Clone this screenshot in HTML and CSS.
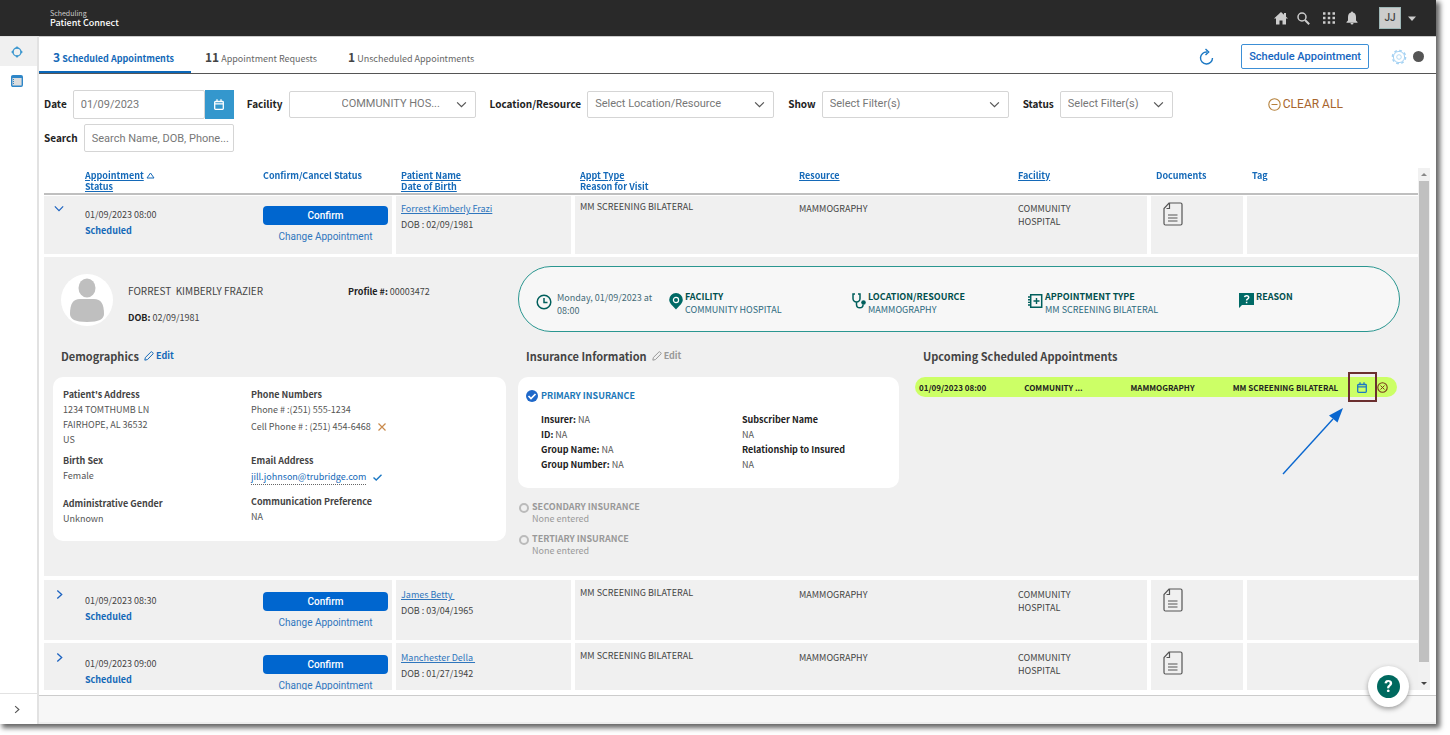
FILE: index.html
```html
<!DOCTYPE html>
<html lang="en">
<head>
<meta charset="utf-8">
<title>Patient Connect - Scheduling</title>
<link rel="stylesheet" href="styles.css">
</head>
<body>
<svg class="sprite" aria-hidden="true">
  <symbol id="i-doc" viewBox="0 0 20 24"><path d="M6 1h11.500a1.500 1.500 0 0 1 1.500 1.500v19a1.500 1.500 0 0 1-1.500 1.500h-15a1.500 1.500 0 0 1-1.500-1.500v-15zM6.500 1v5.500h-3M5 13h9.500M5 16h9.500M5 19h9.500" fill="none" stroke="#555" stroke-width="1.200"/></symbol>
  <symbol id="i-down" viewBox="0 0 12 8"><path d="M1 1.500l5 5 5-5" fill="none" stroke="currentColor" stroke-width="1.400"/></symbol>
  <symbol id="i-right" viewBox="0 0 8 12"><path d="M1.500 1.500l5 4.500-5 4.500" fill="none" stroke="currentColor" stroke-width="1.500"/></symbol>
  <symbol id="i-cal" viewBox="0 0 10 11"><path d="M1.500 2.500h7a.800.800 0 0 1 .800.800v6.200a.800.800 0 0 1-.800.800h-7a.800.800 0 0 1-.800-.800v-6.200a.800.800 0 0 1 .800-.800zM.700 4.900h8.600M3 .300v2.500M7 .300v2.500" fill="none" stroke="currentColor" stroke-width="1.300"/></symbol>
  <symbol id="i-pencil" viewBox="0 0 12 12"><path d="M1 11l.600-3.200L8.300 1.200a1 1 0 0 1 1.400 0l1 1a1 1 0 0 1 0 1.400L4.100 10.300z" fill="none" stroke="currentColor" stroke-width="1.200"/></symbol>
</svg>
<div class="app">
  <header class="topbar">
    <div class="brand"><span class="brand-sub">Scheduling</span><span class="brand-main">Patient Connect</span></div>
    <nav class="top-icons">
      <button type="button" aria-label="Home"><svg width="14" height="13" viewBox="0 0 14 13"><path d="M7 0l3 2.800V1h2v3.700L14 6.600h-2V12.500H8.500V8.500h-3v4H2V6.600H0z" fill="#ccc"/></svg></button>
      <button type="button" aria-label="Search"><svg width="13" height="13" viewBox="0 0 13 13"><circle cx="5" cy="5" r="4" fill="none" stroke="#ccc" stroke-width="1.500"/><path d="M8 8l4.200 4.200" stroke="#ccc" stroke-width="2"/></svg></button>
      <button type="button" aria-label="Apps" class="apps"><svg width="12" height="12" viewBox="0 0 12 12"><path d="M0 1.500h12M0 6h12M0 10.500h12" stroke="#ccc" stroke-width="2.500" stroke-dasharray="2.500 2.250"/></svg></button>
      <button type="button" aria-label="Notifications" class="bell"><svg width="12" height="14" viewBox="0 0 12 14"><path d="M6 .500a1 1 0 0 1 1 1C9 2 10 3.700 10 6v3.500l1.500 1.500v.700H.500V11L2 9.500V6c0-2.300 1-4 3-4.500a1 1 0 0 1 1-1zM4.500 12h3a1.500 1.500 0 0 1-3 0z" fill="#ccc"/></svg></button>
      <button type="button" class="user"><span>JJ</span><svg width="8" height="5" viewBox="0 0 8 5"><path d="M0 .500h8L4 5z" fill="#ccc"/></svg></button>
    </nav>
  </header>
  <div class="body">
    <aside class="side">
      <a class="side-item active" href="#" aria-label="Patient Connect"><svg width="12" height="12" viewBox="0 0 12 12"><circle cx="6" cy="6" r="4" fill="none" stroke="#3c97cf" stroke-width="1.300"/><path d="M6 0l1.800 2.500H4.200zM6 12l1.800-2.500H4.200zM0 6l2.500-1.800v3.600zM12 6L9.500 4.200v3.600z" fill="#3c97cf"/></svg></a>
      <a class="side-item" href="#" aria-label="Schedule"><svg width="12" height="12" viewBox="0 0 12 12"><rect x=".700" y=".700" width="10.600" height="10.600" rx="1.200" fill="#ddd" stroke="#2e86c8" stroke-width="1.400"/><path d="M1 2h10" stroke="#2e86c8" stroke-width="2"/><path d="M2.500 4v6" stroke="#2e86c8" stroke-dasharray="1 1"/></svg></a>
      <button type="button" class="side-toggle" aria-label="Expand menu"><svg width="6" height="9"><use href="#i-right"/></svg></button>
    </aside>
    <div class="page">
      <main class="main">
        <div class="tabs">
          <a class="tab current" href="#"><b>3</b> Scheduled Appointments</a>
          <a class="tab" href="#"><b>11</b> Appointment Requests</a>
          <a class="tab" href="#"><b>1</b> Unscheduled Appointments</a>
          <div class="tab-actions">
            <button type="button" aria-label="Refresh" class="icon-btn"><svg width="15" height="17" viewBox="0 0 15 17"><path d="M8 4a6 6 0 1 0 5.500 6" fill="none" stroke="#1b78c4" stroke-width="1.400"/><path d="M6.500 1l3.200 3-3.200 3" fill="none" stroke="#1b78c4" stroke-width="1.400"/></svg></button>
            <button type="button" class="schedule">Schedule Appointment</button>
            <button type="button" aria-label="Settings" class="icon-btn"><svg width="16" height="16" viewBox="0 0 16 16"><circle cx="8" cy="8" r="6.600" fill="none" stroke="#a5d2f3" stroke-width="1.500" stroke-dasharray="2.800 2.384"/><circle cx="8" cy="8" r="5.600" fill="none" stroke="#a5d2f3"/><circle cx="8" cy="8" r="2.300" fill="none" stroke="#b5dbf5"/></svg></button>
            <span class="dot"></span>
          </div>
        </div>
        <form class="filters">
          <div class="filter-row">
            <label for="date">Date</label>
            <div class="date-box"><input id="date" type="text" value="01/09/2023"><button type="button" aria-label="Pick a date"><svg width="10" height="11"><use href="#i-cal"/></svg></button></div>
            <label for="facility">Facility</label>
            <div class="pick"><select id="facility" class="indent"><option>COMMUNITY HOS...</option></select><svg width="11" height="7"><use href="#i-down"/></svg></div>
            <label for="location">Location/Resource</label>
            <div class="pick"><select id="location"><option>Select Location/Resource</option></select><svg width="11" height="7"><use href="#i-down"/></svg></div>
            <label for="show">Show</label>
            <div class="pick"><select id="show"><option>Select Filter(s)</option></select><svg width="11" height="7"><use href="#i-down"/></svg></div>
            <label for="status">Status</label>
            <div class="pick small"><select id="status"><option>Select Filter(s)</option></select><svg width="11" height="7"><use href="#i-down"/></svg></div>
            <button type="reset" class="clear"><svg width="13" height="13" viewBox="0 0 13 13"><circle cx="6.500" cy="6.500" r="5.700" fill="none" stroke="#b5803a" stroke-width="1.100"/><path d="M3.500 6.500h6" stroke="#b5803a"/></svg>CLEAR ALL</button>
          </div>
          <div class="filter-row">
            <label for="search">Search</label>
            <input id="search" class="search" type="text" placeholder="Search Name, DOB, Phone...">
          </div>
        </form>
        <div class="list">
          <div class="scroll">
            <table>
              <colgroup><col class="c-exp"><col class="c-appt"><col class="c-conf"><col class="c-pat"><col class="c-type"><col class="c-res"><col class="c-fac"><col class="c-doc"><col class="c-tag"></colgroup>
              <thead>
                <tr>
                  <th></th>
                  <th><a href="#">Appointment</a> <svg width="9" height="7" viewBox="0 0 9 7"><path d="M4.500 1L8 6H1z" fill="none" stroke="#1469b8"/></svg><br><a href="#">Status</a></th>
                  <th>Confirm/Cancel Status</th>
                  <th class="inset"><a href="#">Patient Name</a><br><a href="#">Date of Birth</a></th>
                  <th class="inset"><a href="#">Appt Type</a><br>Reason for Visit</th>
                  <th><a href="#">Resource</a></th>
                  <th><a href="#">Facility</a></th>
                  <th class="inset">Documents</th>
                  <th class="inset">Tag</th>
                </tr>
              </thead>
              <tbody>
                <tr class="row">
                  <td class="exp open"><button type="button" aria-label="Collapse"><svg width="10" height="7"><use href="#i-down"/></svg></button></td>
                  <td class="appt">01/09/2023 08:00<br><a href="#">Scheduled</a></td>
                  <td class="conf split"><button type="button" class="confirm">Confirm</button><a href="#">Change Appointment</a></td>
                  <td class="pat split"><a href="#">Forrest Kimberly Frazi</a><br>DOB : 02/09/1981</td>
                  <td class="type">MM SCREENING BILATERAL</td>
                  <td class="res">MAMMOGRAPHY</td>
                  <td class="fac split">COMMUNITY<br>HOSPITAL</td>
                  <td class="docs split"><button type="button" aria-label="Documents"><svg width="20" height="24"><use href="#i-doc"/></svg></button></td>
                  <td></td>
                </tr>
                <tr>
                  <td colspan="9" class="detail-cell">
                    <div class="detail">
                      <div class="person">
                        <svg class="avatar" width="52" height="52" viewBox="0 0 52 52"><circle cx="26" cy="26" r="26" fill="#fff"/><ellipse cx="26" cy="14" rx="8.500" ry="9.500" fill="#bfbfbf"/><path d="M9 40c0-10 3-15 10-15h14c7 0 10 5 10 15 0 5-5 8-17 8S9 45 9 40z" fill="#bfbfbf"/></svg>
                        <div class="who"><span class="name">FORREST&nbsp; KIMBERLY FRAZIER</span><span><b>DOB:</b> 02/09/1981</span></div>
                        <span class="profile"><b>Profile #:</b> 00003472</span>
                      </div>
                      <div class="summary">
                        <div class="fact when"><svg width="16" height="16" viewBox="0 0 16 16"><circle cx="8" cy="8" r="6.800" fill="none" stroke="#005f5c" stroke-width="1.500"/><path d="M8 4v4.500h3.500" fill="none" stroke="#005f5c" stroke-width="1.500"/></svg><p>Monday, 01/09/2023 at 08:00</p></div>
                        <div class="fact"><svg width="14" height="17" viewBox="0 0 14 17"><path d="M7 0a6.800 6.800 0 0 1 6.800 6.800C13.800 10.500 10 13 7 16.500 4 13 .200 10.500.200 6.800A6.800 6.800 0 0 1 7 0z" fill="#006a66"/><circle cx="7" cy="7" r="2.600" fill="none" stroke="#fff" stroke-width="1.200"/></svg><p><b>FACILITY</b>COMMUNITY HOSPITAL</p></div>
                        <div class="fact"><svg width="14" height="16" viewBox="0 0 14 16"><path d="M3 1H1v4.500a3.500 3.500 0 0 0 7 0V1H6M4.500 9v2.500a3.300 3.300 0 0 0 6.600 0" fill="none" stroke="#005f5c" stroke-width="1.500"/><circle cx="11.500" cy="9.500" r="2.300" fill="#005f5c"/></svg><p><b>LOCATION/RESOURCE</b>MAMMOGRAPHY</p></div>
                        <div class="fact"><svg width="15" height="16" viewBox="0 0 15 16"><path d="M2.700 1.700h11v12.600h-11z" fill="none" stroke="#005f5c" stroke-width="1.500"/><path d="M0 4h3M0 6.700h3M0 9.400h3M0 12h3M5.500 8h6M8.500 5v6" stroke="#005f5c" stroke-width="1.400"/></svg><p><b>APPOINTMENT TYPE</b>MM SCREENING BILATERAL</p></div>
                        <div class="fact"><svg width="15" height="15" viewBox="0 0 15 15"><path d="M0 0h15v12H3l-3 3z" fill="#006a66"/><path d="M5.500 4.200c.400-2.200 4.200-2 4.200.200 0 1.500-2.100 1.500-2.100 3.200M7.600 8.700v1.600" fill="none" stroke="#fff" stroke-width="1.500"/></svg><p><b>REASON</b></p></div>
                      </div>
                      <section class="demo">
                        <h2>Demographics <a href="#" class="edit"><svg width="10" height="10"><use href="#i-pencil"/></svg>Edit</a></h2>
                        <div class="card demo-card">
                          <dl>
                            <dt>Patient's Address</dt><dd>1234 TOMTHUMB LN<br>FAIRHOPE, AL 36532<br>US</dd>
                            <dt>Birth Sex</dt><dd>Female</dd>
                            <dt class="apart">Administrative Gender</dt><dd>Unknown</dd>
                          </dl>
                          <dl>
                            <dt>Phone Numbers</dt><dd>Phone # :(251) 555-1234</dd><dd class="cell">Cell Phone # : (251) 454-6468 <svg width="8" height="8" viewBox="0 0 8 8"><path d="M.500.500l7 7M7.500.500l-7 7" stroke="#c98a4b" stroke-width="1.200"/></svg></dd>
                            <dt class="email-title">Email Address</dt><dd class="email"><a href="#">jill.johnson@trubridge.com</a> <svg width="9" height="7" viewBox="0 0 9 7"><path d="M.500 3.500L3.200 6 8.500.700" fill="none" stroke="#1b78c4" stroke-width="1.400"/></svg></dd>
                            <dt class="pref">Communication Preference</dt><dd>NA</dd>
                          </dl>
                        </div>
                      </section>
                      <section class="insurance">
                        <h2>Insurance Information <a href="#" class="edit off"><svg width="10" height="10"><use href="#i-pencil"/></svg>Edit</a></h2>
                        <div class="card">
                          <h3><svg width="12" height="12" viewBox="0 0 12 12"><circle cx="6" cy="6" r="6" fill="#1f68c9"/><path d="M2.500 6l2.500 2.500 4.500-4.500" fill="none" stroke="#fff" stroke-width="1.700"/></svg>PRIMARY INSURANCE</h3>
                          <div class="policy">
                            <p><b>Insurer:</b> NA<br><b>ID:</b> NA<br><b>Group Name:</b> NA<br><b>Group Number:</b> NA</p>
                            <p><b>Subscriber Name</b><br>NA<br><b>Relationship to Insured</b><br>NA</p>
                          </div>
                        </div>
                        <div class="none"><span class="ring"></span><p><b>SECONDARY INSURANCE</b>None entered</p></div>
                        <div class="none"><span class="ring"></span><p><b>TERTIARY INSURANCE</b>None entered</p></div>
                      </section>
                      <section class="upcoming">
                        <h2>Upcoming Scheduled Appointments</h2>
                        <div class="up-row">
                          <span>01/09/2023 08:00</span><span>COMMUNITY ...</span><span>MAMMOGRAPHY</span><span>MM SCREENING BILATERAL</span>
                          <button type="button" class="resched" aria-label="Reschedule"><svg width="10" height="11"><use href="#i-cal"/></svg><i class="frame"></i></button>
                          <button type="button" class="cancel" aria-label="Cancel"><svg width="11" height="11" viewBox="0 0 11 11"><circle cx="5.500" cy="5.500" r="4.700" fill="none" stroke="#7a3b1d" stroke-width="1.100"/><path d="M3.500 3.500l4 4M7.500 3.500l-4 4" stroke="#7a3b1d"/></svg></button>
                        </div>
                        <svg class="arrow" width="64" height="68" viewBox="0 0 64 68"><path d="M2 67L52 12" stroke="#0a67cf" stroke-width="1.400"/><path d="M62 1L48 8.500l8.500 7z" fill="#0a67cf"/></svg>
                      </section>
                    </div>
                  </td>
                </tr>
                <tr class="row">
                  <td class="exp"><button type="button" aria-label="Expand"><svg width="7" height="11"><use href="#i-right"/></svg></button></td>
                  <td class="appt">01/09/2023 08:30<br><a href="#">Scheduled</a></td>
                  <td class="conf split"><button type="button" class="confirm">Confirm</button><a href="#">Change Appointment</a></td>
                  <td class="pat split"><a href="#">James Betty&nbsp;</a><br>DOB : 03/04/1965</td>
                  <td class="type">MM SCREENING BILATERAL</td>
                  <td class="res">MAMMOGRAPHY</td>
                  <td class="fac split">COMMUNITY<br>HOSPITAL</td>
                  <td class="docs split"><button type="button" aria-label="Documents"><svg width="20" height="24"><use href="#i-doc"/></svg></button></td>
                  <td></td>
                </tr>
                <tr class="row">
                  <td class="exp"><button type="button" aria-label="Expand"><svg width="7" height="11"><use href="#i-right"/></svg></button></td>
                  <td class="appt">01/09/2023 09:00<br><a href="#">Scheduled</a></td>
                  <td class="conf split"><button type="button" class="confirm">Confirm</button><a href="#">Change Appointment</a></td>
                  <td class="pat split"><a href="#">Manchester Della&nbsp;</a><br>DOB : 01/27/1942</td>
                  <td class="type">MM SCREENING BILATERAL</td>
                  <td class="res">MAMMOGRAPHY</td>
                  <td class="fac split">COMMUNITY<br>HOSPITAL</td>
                  <td class="docs split"><button type="button" aria-label="Documents"><svg width="20" height="24"><use href="#i-doc"/></svg></button></td>
                  <td></td>
                </tr>
              </tbody>
            </table>
          </div>
          <div class="bar"><svg width="12" height="13" viewBox="0 0 12 13"><path d="M3 8l3-3 3 3z" fill="#888"/></svg><div class="track"><div class="thumb"></div></div><svg width="12" height="13" viewBox="0 0 12 13"><path d="M3 5l3 3 3-3z" fill="#444"/></svg></div>
        </div>
      </main>
      <footer class="foot"></footer>
    </div>
  </div>
  <button type="button" class="help" aria-label="Help"><span>?</span></button>
</div>
</body>
</html>
```

FILE: styles.css
```css
:root {
  --sans: "Noto Sans CJK JP", "Noto Sans CJK SC", "Noto Sans", sans-serif;
  --ui: Roboto, "Liberation Sans", sans-serif;
  --blue: #1469b8;
  --grey: #f0f0f0;
}
* { box-sizing: border-box; }
body { margin: 0; padding: 0 14px 11px 0; height: 100vh; background: #fff; font: 9px/15px var(--sans); color: #444; }
button { font: inherit; color: inherit; border: 0; padding: 0; background: none; }
a { color: var(--blue); text-decoration: none; }
p, h2, h3, dl, dd { margin: 0; }
svg { display: block; flex: none; }
.sprite { position: absolute; width: 0; height: 0; }
.app { position: relative; display: flex; flex-direction: column; height: 100%; box-shadow: 3px 3px 5px 1px #666; background: #fff; }

.topbar { display: flex; justify-content: space-between; align-items: center; height: 36px; flex: none; padding: 0 20px 0 50px; background: #292929; color: #fff; }
.brand { display: flex; flex-direction: column; }
.brand-sub { font-size: 7px; line-height: 9px; color: #ccc; }
.brand-main { font-size: 9px; line-height: 10px; font-weight: 500; }
.top-icons { display: flex; align-items: center; gap: 9px; }
.apps { margin-left: 4px; }
.bell { margin-left: 2px; }
.user { display: flex; align-items: center; gap: 7px; margin-left: 12px; font: 500 10px/20px var(--ui); }
.user span { width: 22px; border: 1px solid #9fb8b8; background: #ccc; color: #444; }

.body { flex: 1; display: flex; min-height: 0; }
.side { width: 39px; flex: none; display: flex; flex-direction: column; border-right: 2px solid #e2e2e2; border-top: 1px solid #e2e2e2; }
.side-item { display: flex; align-items: center; justify-content: center; height: 29px; padding-right: 4px; }
.active { background: var(--grey); }
.side-toggle { margin-top: auto; height: 31px; padding-right: 4px; border-top: 1px solid #e2e2e2; display: flex; align-items: center; justify-content: center; color: #555; }
.page { flex: 1; min-width: 0; display: flex; flex-direction: column; border-top: 1px solid #ccc; }
.main { flex: 1; min-height: 0; display: flex; flex-direction: column; padding-bottom: 5px; border-bottom: 1px solid #ccc; }
.foot { height: 28px; flex: none; background: #f7f7f7; border-bottom: 2px solid #eee; }

.tabs { display: flex; height: 37px; flex: none; border-bottom: 1px solid #555; }
.tab { padding: 6px 17px 0 14px; font-size: 9px; line-height: 27px; color: #666; }
.tab b { font-size: 12px; color: #444; }
.current, .current b { font-weight: 700; color: var(--blue); }
.current { border-bottom: 2px solid #0a67b8; }
.tab-actions { margin-left: auto; display: flex; align-items: center; padding: 3px 12px 0 0; }
.schedule { margin: 0 22px 0 27px; padding: 0 7px; height: 25px; border: 1px solid #3c8fd6; border-radius: 2px; font: 500 11px/23px var(--ui); color: #1565c0; }
.dot { width: 11px; height: 11px; margin-left: 6px; border-radius: 50%; background: #555; }

.filters { display: flex; flex-direction: column; gap: 6px; padding: 16px 5px; flex: none; }
.filter-row { display: flex; align-items: center; gap: 6px; height: 28px; font-size: 10px; }
.filter-row label { padding-bottom: 2px; font-weight: 700; color: #222; }
.date-box { display: flex; width: 161px; height: 29px; margin-right: 7px; }
.filters input, .filters select { width: 100%; min-width: 0; height: 27px; padding: 0 7px; border: 1px solid #d5d5d5; border-radius: 2px; background: #fff; font: 11px/24px var(--ui); color: #777; appearance: none; }
.filters .date-box input { height: 29px; }
.filters input::placeholder { color: #777; opacity: 1; }
.date-box button { width: 29px; flex: none; display: flex; align-items: center; justify-content: center; background: #3497cd; color: #fff; }
.pick { position: relative; width: 187px; margin-right: 8px; color: #555; }
.pick svg { position: absolute; right: 9px; top: 10px; pointer-events: none; }
.filters .indent { padding-left: 52px; }
.small { width: 113px; }
.filters .search { width: 150px; height: 28px; padding-right: 2px; }
.clear { display: flex; align-items: center; gap: 2px; margin-left: 81px; font: 12px/16px var(--ui); color: #a8652c; }

.list { flex: 1; min-height: 0; display: flex; padding: 0 6px 0 5px; }
.scroll { flex: 1; overflow-y: auto; scrollbar-width: none; }
.bar { width: 12px; display: flex; flex-direction: column; background: #f1f1f1; }
.track { flex: 1; padding: 0 1px; }
.thumb { height: 97%; background: #c0c0c0; }

table { width: 100%; table-layout: fixed; border-collapse: separate; border-spacing: 0; }
.c-exp { width: 41px; } .c-appt { width: 178px; } .c-conf { width: 133px; }
.c-pat { width: 179px; } .c-type { width: 224px; } .c-res { width: 219px; }
.c-fac { width: 133px; } .c-doc { width: 96px; } .c-tag { width: 171px; }
th { position: sticky; top: 0; z-index: 1; height: 26px; padding: 2px 0 1px; vertical-align: top; text-align: left; font-size: 9px; line-height: 11px; font-weight: 700; color: var(--blue); background: #fff; border-bottom: 1px solid #bfbfbf; box-shadow: 0 1px #bfbfbf, 0 2px #fff; }
th a { text-decoration: underline; }
th svg { display: inline-block; }
th.inset { padding-left: 5px; }
td { padding: 0; vertical-align: top; background: var(--grey); border-bottom: 3px solid #fff; }
.row { height: 63px; }
.split { border-right: 4px solid #fff; }
.exp button { padding: 9px 0 0 12px; color: #1b62c0; }
.open button { padding: 11px 0 0 10px; }
.appt { padding-top: 13px; line-height: 16px; }
.appt a { font-weight: 700; }
.conf { padding: 12px 4px 0 0; text-align: center; font: 10px/22px var(--ui); }
.confirm { display: block; width: 100%; height: 19px; margin-bottom: 1px; border-radius: 4px; background: #0066cf; color: #fff; font: 500 10px/19px var(--ui); }
.conf a { color: #2f76bd; }
.pat { padding: 7px 0 0 5px; line-height: 16px; }
.pat a { text-decoration: underline; color: #2f76bd; }
.type { padding: 5px 0 0 5px; }
.res { padding-top: 7px; }
.fac { padding-top: 8px; line-height: 13px; }
.docs button { padding: 8px 0 0 12px; }

.detail-cell { border-bottom-width: 4px; }
.detail { display: grid; grid-template-columns: 453fr 381fr 486fr; column-gap: 12px; padding: 9px 21px 0 9px; height: 319px; grid-template-rows: 66px 1fr; }
.person { display: flex; padding: 8px 0 0 8px; color: #444; }
.person b, .policy b { color: #222; }
.who { display: flex; flex-direction: column; gap: 11px; margin: 9px 0 0 15px; width: 220px; }
.name { font-size: 10px; line-height: 16px; }
.profile { margin-top: 10px; }
.summary { grid-column: 2 / 4; display: grid; grid-template-columns: 133fr 183fr 176fr 211fr 160fr; margin-right: -3px; padding: 23px 0 0 17px; border: 1px solid #2a9690; border-radius: 33px; background: #f7f7f7; color: #2d6a80; }
.fact { display: flex; gap: 2px; line-height: 13px; }
.fact svg { margin-top: 3px; }
.fact b { display: block; color: #004f4d; }
.when { gap: 5px; padding-top: 1px; }
.when p { width: 102px; color: #456b78; }
h2 { padding: 14px 8px 11px; font-size: 11px; line-height: 20px; font-weight: 700; color: #444; display: flex; gap: 5px; }
.edit { display: flex; align-items: center; gap: 2px; font-size: 9px; }
.off { color: #999; }
.card { border-radius: 10px; background: #fff; }
.demo-card { display: grid; grid-template-columns: 188fr 245fr; padding: 10px; height: 164px; color: #555; }
dt { font-weight: 700; color: #444; }
dt { margin-top: 6px; }
dt:first-child { margin-top: 0; }
.apart { margin-top: 13px; }
.cell { display: flex; align-items: center; gap: 7px; line-height: 19px; }
.email-title { margin-top: 17px; }
.email { display: flex; align-items: center; gap: 7px; padding-top: 2px; line-height: 20px; }
.email a { border-bottom: 1px dotted #666; line-height: 14px; }
.pref { margin-top: 9px; }
.insurance .card { height: 111px; padding: 11px 8px; margin-bottom: 12px; }
h3 { display: flex; align-items: center; gap: 3px; font-size: 9px; line-height: 15px; color: #1b78b8; }
.policy { display: grid; grid-template-columns: 1fr 149px; padding: 9px 0 0 15px; color: #555; }
.none { display: flex; gap: 3px; padding: 1px 0 7px 1px; line-height: 12px; color: #999; }
.none b { display: block; }
.ring { width: 10px; height: 10px; margin-top: 2px; border: 2px solid #bbb; border-radius: 50%; }
.upcoming { position: relative; padding-left: 4px; }
.up-row { display: grid; grid-template-columns: 105fr 106fr 102fr 115fr 28px 21px; align-items: center; height: 20px; padding-left: 4px; border-radius: 10px; background: #cf6; font-size: 8px; font-weight: 700; color: #222; white-space: nowrap; }
.resched { position: relative; display: flex; justify-content: center; color: #1b78c4; }
.frame { position: absolute; left: 0; top: -10px; width: 29px; height: 30px; border: 2px solid #6b2f2f; }
.cancel { padding-left: 1px; }
.arrow { position: absolute; right: 52px; top: 75px; }

.help { position: absolute; right: 27px; bottom: 17px; width: 41px; height: 41px; border-radius: 50%; background: #fff; box-shadow: 0 2px 5px #999; display: flex; align-items: center; justify-content: center; z-index: 2; }
.help span { width: 23px; height: 23px; border-radius: 50%; background: #00695f; color: #fff; font: 700 17px/23px var(--ui); }
```
